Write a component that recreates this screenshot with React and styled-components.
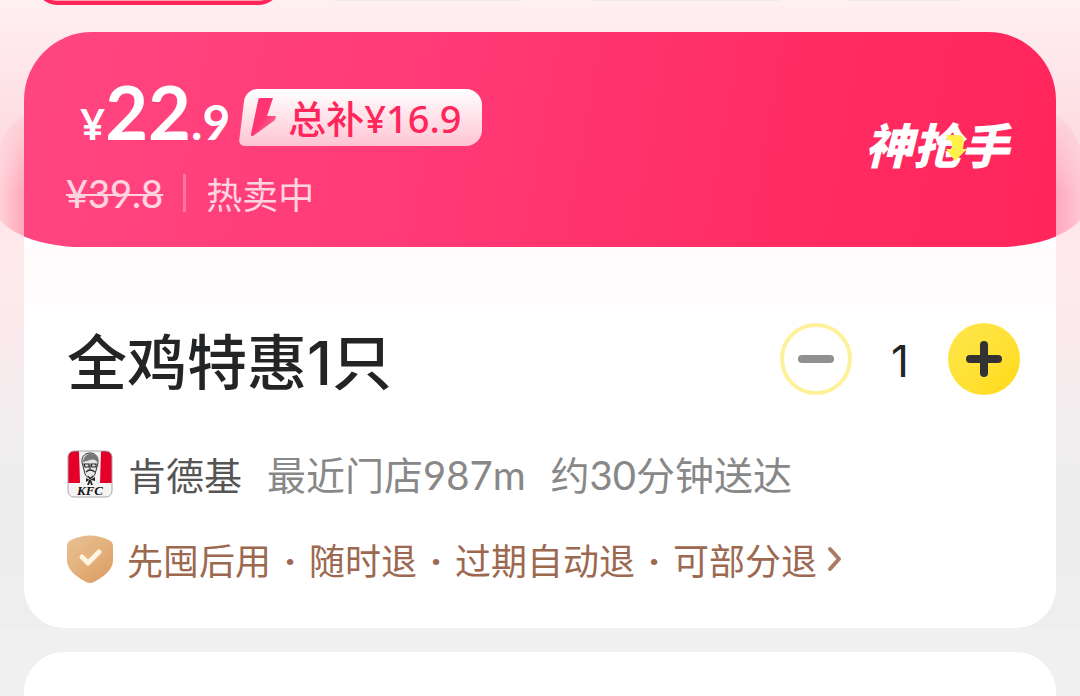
import styled, {createGlobalStyle} from 'styled-components';

const tabs = [
    {grow: 243, active: true},
    {grow: 229},
    {grow: 229},
    {grow: 149},
];

const services = ['先囤后用', '随时退', '过期自动退', '可部分退'];

export default function App() {
    return (
        <>
            <GlobalStyle />
            <Page>
                <Tabs>
                    {tabs.map((t, i) => <Tab key={i} $grow={t.grow} $active={t.active} />)}
                </Tabs>
                <Card>
                    <Hero>
                        <HeroClip>
                            <HeroFill>
                                <div>
                                    <PriceRow>
                                        <Price>
                                            <Yen>¥</Yen>
                                            <Big>22</Big>
                                            <Small>.9</Small>
                                        </Price>
                                        <Badge>
                                            <BoltIcon />
                                            <span>总补<Num>¥16.9</Num></span>
                                        </Badge>
                                    </PriceRow>
                                    <SubRow>
                                        <OldPrice>¥39.8</OldPrice>
                                        <Divider />
                                        <span>热卖中</span>
                                    </SubRow>
                                </div>
                                <Brand>
                                    神抢手
                                    <ArrowIcon />
                                </Brand>
                            </HeroFill>
                        </HeroClip>
                    </Hero>
                    <Content>
                        <TitleRow>
                            <Title>全鸡特惠<One>1</One>只</Title>
                            <Stepper>
                                <MinusButton aria-label="减少">
                                    <svg width="36" height="36" viewBox="0 0 36 36">
                                        <path d="M4 18H32" stroke="#909090" strokeWidth="8" strokeLinecap="round" />
                                    </svg>
                                </MinusButton>
                                <Count>1</Count>
                                <PlusButton aria-label="增加">
                                    <svg width="36" height="36" viewBox="0 0 36 36">
                                        <path d="M4 18H32M18 4V32" stroke="#333333" strokeWidth="8" strokeLinecap="round" />
                                    </svg>
                                </PlusButton>
                            </Stepper>
                        </TitleRow>
                        <StoreRow>
                            <KfcLogo />
                            <StoreName>肯德基</StoreName>
                            <span>最近门店<Digits>987m</Digits></span>
                            <span>约<Digits>30</Digits>分钟送达</span>
                        </StoreRow>
                        <ServiceRow href="#service">
                            <ShieldIcon />
                            <Services>
                                {services.map((s) => <li key={s}>{s}</li>)}
                            </Services>
                            <svg width="16" height="28" viewBox="0 0 16 28" fill="none">
                                <path d="M3 4L12 14L3 24" stroke="#a87c66" strokeWidth="4" strokeLinecap="round" strokeLinejoin="round" />
                            </svg>
                        </ServiceRow>
                    </Content>
                </Card>
                <NextCard />
            </Page>
        </>
    )
}

function BoltIcon() {
    return (
        <svg width="26" height="40" viewBox="0 0 26 40">
            <defs>
                <linearGradient id="bolt" x1="0" y1="0" x2="1" y2="1">
                    <stop offset="0.5" stopColor="#ff3572" />
                    <stop offset="1" stopColor="#ff7f9f" />
                </linearGradient>
            </defs>
            <path d="M10 1H23L17 19H26L25 23L3 39Q1 40 1 37L8 4Q8 1 10 1Z" fill="url(#bolt)" />
        </svg>
    )
}

function ArrowIcon() {
    return (
        <Arrow width="24" height="28" viewBox="-1 -1 24 28">
            <path d="M2 0H13Q19 0 19 7L18 14H22L10 26L1 14H7V9Q7 5 2 5Z" fill="#fff04a" />
        </Arrow>
    )
}

function KfcLogo() {
    return (
        <svg width="46" height="48" viewBox="0 0 46 48" role="img" aria-label="KFC">
            <clipPath id="kfcBox"><rect x="1" y="1" width="44" height="46" rx="6" /></clipPath>
            <g clipPath="url(#kfcBox)">
                <rect width="46" height="48" fill="#f5f3f3" />
                <path d="M0 0H12L13 33H0ZM34 0H46V33H33Z" fill="#e4002b" />
                <path d="M12 0H34L31 34H15Z" fill="#f5f3f3" />
                <path d="M16 16C13 8 17 3 23 3S33 8 30 17L28 24C26 29 20 29 18 24Z" fill="#e6e6e6" stroke="#333333" strokeWidth="1" />
                <path d="M16 12C17 5 22 3 25 4C30 5 31 9 30 12C27 7 22 11 16 12Z" fill="#777777" />
                <path d="M17 14H22V17H18ZM24 14H29V17H25Z" fill="none" stroke="#222222" strokeWidth="1.2" />
                <path d="M23 15V20M19 22Q23 18 28 22M21 26L23 29L26 26" fill="none" stroke="#333333" strokeWidth="1.2" />
                <path d="M19 28L23 30L28 27V31L24 30L26 35H24L23 32L22 35H20L22 30L19 32Z" fill="#222222" />
            </g>
            <text x="23" y="45" textAnchor="middle" fontFamily="Liberation Serif, serif" fontSize="13" fontWeight="700" fontStyle="italic" fill="#111111">KFC</text>
            <rect x="1" y="1" width="44" height="46" rx="6" fill="none" stroke="#aaa6a8" strokeWidth="1" />
        </svg>
    )
}

function ShieldIcon() {
    return (
        <svg width="46" height="48" viewBox="0 0 46 48">
            <defs>
                <linearGradient id="shield" x1="0" y1="0" x2="0.8" y2="1">
                    <stop offset="0" stopColor="#e9c193" />
                    <stop offset="0.5" stopColor="#e3b27e" />
                    <stop offset="1" stopColor="#dd9d66" />
                </linearGradient>
            </defs>
            <path d="M4 5Q23 -4 42 5Q46 7 46 11V25C46 36 34 43 27 47Q23 49 19 47C12 43 0 36 0 25V11Q0 7 4 5Z" fill="url(#shield)" />
            <path d="M15 22L21 28L32 17" fill="none" stroke="#fff4df" strokeWidth="5" strokeLinecap="round" strokeLinejoin="round" />
        </svg>
    )
}

const GlobalStyle = createGlobalStyle`
    * {
        box-sizing: border-box;
    }
    body {
        margin: 0;
        background: #f0f0f0;
        font-family: 'Noto Sans CJK SC', sans-serif;
        overflow: hidden;
    }
    svg {
        display: block;
        flex-shrink: 0;
    }
`;

const Page = styled.main`
    min-height: 100vh;
    isolation: isolate;
    overflow: hidden;
    background: linear-gradient(#fff0f3 0, #ffebee 32px, #fddde2 130px, #feeaed 260px, #fbe9ec 330px, #f3edee 400px, #eeedee 470px, #efeeef 628px, #f0f0f0 628px);
`;

const Tabs = styled.div`
    height: 32px;
    padding: 0 102px 27px 34px;
    display: flex;
    align-items: flex-end;
    gap: 32px;
    overflow: hidden;
`;

const Tab = styled.div`
    flex: ${(props) => props.$grow} 1 0;
    height: 64px;
    border-radius: 24px;
    margin-bottom: ${(props) => (props.$active ? 0 : 4)}px;
    background: ${(props) => (props.$active ? '#ffa3b8' : '#ebe9e9')};
    border: ${(props) => (props.$active ? '4px solid #ff2659' : 'none')};
`;

const Card = styled.section`
    margin: 0 24px;
    border-radius: 72px 72px 40px 40px;
    background: linear-gradient(#ffffff 215px, #fffbfc 216px, #ffffff 330px);
`;

const Hero = styled.header`
    position: relative;
    &::before {
        content: '';
        position: absolute;
        z-index: -1;
        top: 78px;
        bottom: 0;
        left: -32px;
        right: -32px;
        border-radius: 48px 48px 90px 90px / 80px 80px 45px 45px;
        background: linear-gradient(90deg, #ffd0d8 8px, #ffa8b8 32px, #ffa8be calc(100% - 32px), #ffc6d1 calc(100% - 8px));
        mask-image: linear-gradient(rgba(0, 0, 0, 0.1), #000000 60%);
    }
`;

const HeroClip = styled.div`
    border-radius: 68px 68px 0 0;
    overflow: hidden;
`;

const HeroFill = styled.div`
    height: 215px;
    margin: 0 -32px;
    padding: 45px 79px 0 74px;
    display: flex;
    justify-content: space-between;
    border-radius: 0 0 90px 90px / 0 0 45px 45px;
    background: linear-gradient(100deg, #ff4782, #ff3a75 40%, #ff2b62 75%, #ff255a);
    color: #ffffff;
`;

const PriceRow = styled.div`
    display: flex;
    align-items: center;
    gap: 8px;
    height: 80px;
    padding-left: 14px;
`;

const Price = styled.div`
    display: flex;
    align-items: baseline;
    font-family: Lato, sans-serif;
    line-height: 80px;
    font-weight: 700;
`;

const Yen = styled.span`
    font-family: 'Noto Sans', sans-serif;
    font-size: 44px;
    font-weight: 600;
`;

const Big = styled.span`
    font-size: 74px;
`;

const Small = styled.span`
    font-size: 48px;
`;

const Badge = styled.div`
    position: relative;
    display: flex;
    align-items: center;
    gap: 12px;
    height: 57px;
    padding: 0 20px 0 12px;
    font-size: 38px;
    line-height: 57px;
    font-weight: 500;
    color: #ff265c;
    isolation: isolate;
    &::before, &::after {
        content: '';
        position: absolute;
        z-index: -1;
        top: 0;
        bottom: 0;
        background: linear-gradient(#ffffff, #ffc4d4);
    }
    &::before {
        left: 4px;
        width: 60%;
        border-radius: 12px 0 0 6px;
        transform: skewX(-7deg);
    }
    &::after {
        left: 50%;
        right: 0;
        border-radius: 0 16px 16px 0;
    }
`;

const Num = styled.span`
    font-family: 'Noto Sans', sans-serif;
`;

const One = styled.span`
    font-family: Inter, sans-serif;
`;

const SubRow = styled.div`
    display: flex;
    align-items: center;
    gap: 20px;
    height: 64px;
    margin-top: 4px;
    font-size: 36px;
    line-height: 64px;
    color: #ffd3e0;
`;

const OldPrice = styled.del`
    font-family: Lato, sans-serif;
    font-weight: 500;
    font-size: 38px;
    text-decoration-thickness: 2px;
`;

const Divider = styled.i`
    width: 3px;
    height: 38px;
    background: #ff75a0;
`;

const Brand = styled.div`
    position: relative;
    align-self: flex-start;
    margin-top: 34px;
    font-size: 48px;
    line-height: 64px;
    font-weight: 900;
    font-style: italic;
`;

const Arrow = styled.svg`
    position: absolute;
    left: 79px;
    top: 23px;
`;

const Content = styled.div`
    padding: 76px 36px 45px 43px;
`;

const TitleRow = styled.div`
    display: flex;
    align-items: center;
    justify-content: space-between;
    height: 72px;
`;

const Title = styled.h1`
    margin: 0;
    padding-top: 4px;
    font-size: 60px;
    line-height: 72px;
    font-weight: 500;
    color: #222426;
`;

const Stepper = styled.div`
    display: flex;
    align-items: center;
`;

const RoundButton = styled.button`
    display: flex;
    align-items: center;
    justify-content: center;
    width: 72px;
    height: 72px;
    padding: 0;
    border: none;
    border-radius: 50%;
    cursor: pointer;
`;

const MinusButton = styled(RoundButton)`
    background: #ffffff;
    border: 4px solid #fff09a;
`;

const PlusButton = styled(RoundButton)`
    background: linear-gradient(135deg, #ffe74d, #ffe032 60%, #ffd916);
`;

const Count = styled.output`
    width: 96px;
    padding-top: 4px;
    text-align: center;
    font-family: Inter, sans-serif;
    font-size: 44px;
    line-height: 72px;
    color: #222426;
`;

const StoreRow = styled.div`
    display: flex;
    align-items: center;
    gap: 25px;
    height: 48px;
    margin-top: 55px;
    font-size: 39px;
    line-height: 48px;
    color: #888888;
`;

const StoreName = styled.strong`
    margin-left: -10px;
    font-size: 38px;
    font-weight: 400;
    color: #555555;
`;

const Digits = styled.span`
    font-family: Lato, sans-serif;
    font-size: 40px;
`;

const ServiceRow = styled.a`
    display: flex;
    align-items: center;
    gap: 14px;
    height: 48px;
    margin-top: 37px;
    font-size: 36px;
    line-height: 48px;
    color: #9c6950;
    text-decoration: none;
`;

const Services = styled.ul`
    display: flex;
    margin: 0 -4px 0 0;
    padding: 2px 0 0;
    list-style: none;
    li + li::before {
        content: '·';
        display: inline-block;
        width: 38px;
        text-align: center;
        font-family: 'Noto Sans', sans-serif;
        font-weight: 700;
    }
`;

const NextCard = styled.section`
    height: 120px;
    margin: 24px 24px -76px;
    border-radius: 40px;
    background: #ffffff;
`;
